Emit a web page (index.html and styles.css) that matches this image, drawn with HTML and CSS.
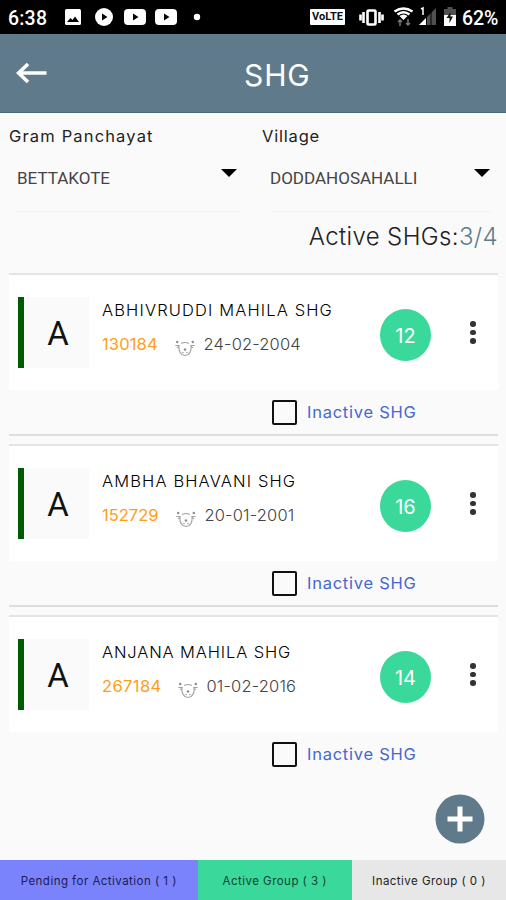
FILE: index.html
```html
<!DOCTYPE html>
<html lang="en">
<head>
<meta charset="utf-8">
<title>SHG</title>
<link rel="stylesheet" href="styles.css">
</head>
<body>
<svg class="defs" width="0" height="0" aria-hidden="true">
  <symbol id="cow" viewBox="0 0 20 18">
    <g fill="none" stroke="#a2a2a2" stroke-width="1.1">
      <path d="M3.800 6C3.600 11 5 16.300 10 16.500C15 16.300 16.400 11 16.200 6"/>
      <path d="M6.200 4.500Q10 2.500 13.800 4.500M.300 6.500H4.500M15.500 6.500H19.700M2 8.800L4 7.500M18 8.800L16 7.500"/>
    </g>
    <g fill="#8c8c8c"><circle cx="2.200" cy="3" r="1.200"/><circle cx="17.800" cy="3" r="1.200"/><circle cx="10" cy="10.500" r="1.300"/><circle cx="8" cy="13.500" r=".7"/><circle cx="12" cy="13.500" r=".7"/></g>
  </symbol>
</svg>
<div class="screen">
  <div class="status">
    <span class="clock">6:38</span>
    <svg class="notifs" width="140" height="20" viewBox="0 0 140 20">
      <g fill="#fff">
        <rect x="2" y="2" width="16" height="16" rx="1.500"/>
        <circle cx="41" cy="10" r="9"/>
        <rect x="61" y="2" width="22" height="16" rx="4"/>
        <rect x="92" y="2" width="22" height="16" rx="4"/>
        <circle cx="134" cy="10" r="3.200"/>
      </g>
      <path d="M4 15L7.500 11L9.500 13L12 9.500L16 15ZM39 6.500V13.500L44.500 10ZM70 6.500V13.500L75.500 10ZM101 6.500V13.500L106.500 10Z"/>
    </svg>
    <span class="volte">VoLTE</span>
    <svg class="system" width="98" height="24" viewBox="0 0 98 24">
      <g fill="none" stroke="#fff" stroke-width="2">
        <rect x="20.500" y="5.500" width="8" height="14" rx="1" stroke-width="2.600"/>
        <path d="M16.500 7V18M32.500 7V18M13.500 9.500V15.500M35.500 9.500V15.500" stroke-width="2.600"/>
        <path d="M47.500 6.500Q56.500 .500 65.500 6.500M50.500 9.500Q56.500 5 62.500 9.500" stroke-width="2.500"/>
      </g>
      <path d="M52.500 11Q56.500 8 60.500 11L56.500 15Z" fill="#fff"/>
      <path d="M53 21V15M51 17L53 15L55 17M61 14V20M59 18L61 20L63 18" fill="none" stroke="#777" stroke-width="1.500"/>
      <path d="M72 20L89 3V20Z" fill="#505050"/>
      <path d="M72 20L79 13V20Z" fill="#fff"/>
      <path d="M79.500 4V20M84 4V20" stroke="#000"/>
      <path d="M74 4L76 3V10" fill="none" stroke="#fff" stroke-width="1.500"/>
    </svg>
    <svg class="battery" width="12" height="20" viewBox="0 0 12 20">
      <path d="M3.500 2V0H8.500V2H12V8H0V2Z" fill="#505050"/>
      <rect y="8" width="12" height="11" fill="#fff"/>
      <path d="M6.500 5L2.500 11H5.500V16L9 9.500H6.500Z" fill="#111"/>
    </svg>
    <span class="percent">62%</span>
  </div>

  <header class="bar">
    <svg class="back" width="32" height="22" viewBox="0 0 32 22"><path d="M30.500 11H3M12 2L2.500 11L12 20" fill="none" stroke="#fff" stroke-width="3.600"/></svg>
    <h1 class="title">SHG</h1>
  </header>

  <section class="filters">
    <div class="filter">
      <div class="filter-label gp">Gram Panchayat</div>
      <div class="select"><span>BETTAKOTE</span><i class="caret"></i></div>
    </div>
    <div class="filter">
      <div class="filter-label vil">Village</div>
      <div class="select"><span>DODDAHOSAHALLI</span><i class="caret"></i></div>
    </div>
  </section>

  <div class="summary"><span class="sum-label">Active SHGs:</span><span class="sum-count">3/4</span></div>

  <main class="list">
    <article class="card">
      <div class="row">
        <div class="avatar">A</div>
        <div class="info">
          <div class="name n1">ABHIVRUDDI MAHILA SHG</div>
          <div class="meta"><span class="code c1">130184</span><svg class="cow" width="20" height="18"><use href="#cow"/></svg><span class="date">24-02-2004</span></div>
        </div>
        <div class="count">12</div>
        <div class="more"><i></i><i></i><i></i></div>
      </div>
      <label class="inactive"><i class="box"></i><span>Inactive SHG</span></label>
    </article>
    <article class="card">
      <div class="row">
        <div class="avatar">A</div>
        <div class="info">
          <div class="name n2">AMBHA BHAVANI SHG</div>
          <div class="meta"><span class="code c2">152729</span><svg class="cow" width="20" height="18"><use href="#cow"/></svg><span class="date">20-01-2001</span></div>
        </div>
        <div class="count">16</div>
        <div class="more"><i></i><i></i><i></i></div>
      </div>
      <label class="inactive"><i class="box"></i><span>Inactive SHG</span></label>
    </article>
    <article class="card">
      <div class="row">
        <div class="avatar">A</div>
        <div class="info">
          <div class="name n3">ANJANA MAHILA SHG</div>
          <div class="meta"><span class="code c3">267184</span><svg class="cow" width="20" height="18"><use href="#cow"/></svg><span class="date">01-02-2016</span></div>
        </div>
        <div class="count">14</div>
        <div class="more"><i></i><i></i><i></i></div>
      </div>
      <label class="inactive"><i class="box"></i><span>Inactive SHG</span></label>
    </article>
  </main>

  <div class="actions">
    <svg width="50" height="50" viewBox="0 0 50 50"><circle cx="25" cy="25" r="24.500" fill="#5f7b8b"/><path d="M25 12.500V37.500M12.500 25H37.500" stroke="#fff" stroke-width="5"/></svg>
  </div>

  <nav class="tabs">
    <div class="tab pending">Pending for Activation ( 1 )</div>
    <div class="tab active">Active Group ( 3 )</div>
    <div class="tab idle">Inactive Group ( 0 )</div>
  </nav>
</div>
</body>
</html>
```
FILE: styles.css
```css
* { box-sizing: border-box; }
body { margin: 0; font-family: Inter, "Liberation Sans", sans-serif; background: #fafafa; color: #222; }
.defs { position: absolute; }
.screen { width: 506px; height: 900px; display: flex; flex-direction: column; overflow: hidden; white-space: nowrap; }

.status { height: 34px; flex: none; background: #000; color: #fff; display: flex; align-items: center; padding-left: 8px; font: 500 19.5px/34px Roboto, sans-serif; }
.clock { width: 40px; padding-top: 3px; letter-spacing: .2px; }
.notifs { margin-left: 15px; }
.volte { margin-left: 107px; width: 35px; height: 16px; background: #fff; color: #111; border-radius: 1px; font: 700 11px/16px Roboto, sans-serif; text-align: center; }
.system { margin-left: 2px; }
.battery { margin-left: -1px; }
.percent { margin-left: 6px; padding-top: 3px; letter-spacing: -0.1px; }

.bar { height: 79px; flex: none; background: #5f7b8b; border-bottom: 1px solid #47697a; display: grid; grid-template-columns: 48px 1fr; align-items: center; }
.back { margin-left: 16px; }
.title { margin: 4px 0 0; font-size: 30px; line-height: 36px; font-weight: 400; color: #fff; padding-left: 196px; letter-spacing: .9px; }

.filters { height: 99px; flex: none; display: grid; grid-template-columns: 253px 253px; }
.filter { padding: 13px 9px 0; }
.filter-label { font-size: 16.5px; line-height: 20px; letter-spacing: 1.15px; }
.vil { letter-spacing: .8px; }
.select { margin: 10px 5px 0 8px; height: 56px; border-bottom: 1px solid #f4f4f4; display: flex; justify-content: space-between; padding-top: 11px; font: 400 17px/22px Roboto, sans-serif; color: #444; }
.caret { width: 0; height: 0; margin: 2px 2px 0 0; border: 8px solid transparent; border-top: 8px solid #000; border-bottom: 0; }

.summary { height: 61px; flex: none; display: flex; justify-content: flex-end; padding: 10px 8px 0 0; font-size: 24px; line-height: 30px; font-weight: 300; letter-spacing: .37px; }
.sum-count { color: #607d8b; }

.list { height: 503px; flex: none; margin: 0 8px 0 9px; overflow: hidden; }
.card { height: 163px; margin-bottom: 8px; border-top: 2px solid #e4e4e4; border-bottom: 2px solid #dedede; }
.card:last-child { border-bottom: 0; }
.row { height: 115px; background: #fff; display: flex; padding: 22px 0 0 9px; }
.avatar { width: 71px; height: 71px; border-left: 6px solid #005c00; background: #fafafa; color: #111; font: 400 33px/74px Roboto, sans-serif; text-align: center; padding-left: 3px; }
.info { width: 278px; padding: 2px 0 0 13px; }
.name { font-size: 16.5px; line-height: 22px; font-weight: 300; color: #000; letter-spacing: 1.13px; }
.n3 { letter-spacing: .86px; }
.meta { display: flex; margin-top: 12px; line-height: 22px; font-size: 16.5px; font-weight: 300; }
.code { color: #ff9d16; font-weight: 400; }
.c1 { width: 56px; letter-spacing: .15px; }
.c2 { width: 57px; }
.c3 { width: 59px; letter-spacing: .4px; }
.cow { margin: 6px 9px 0 16.5px; }
.date { color: #444; letter-spacing: .15px; }
.count { width: 51px; height: 52px; margin: 12px 0 0 13px; border-radius: 50%; background: #3bd89b; color: #fff; font-size: 20px; line-height: 54px; text-align: center; font-weight: 400; }
.more { display: flex; flex-direction: column; gap: 3px; margin: 24px 0 0 39px; }
.more i { width: 5.5px; height: 5.5px; border-radius: 50%; background: #333; }
.inactive { display: flex; align-items: center; gap: 10px; height: 46px; padding: 0 0 2px 263px; font-size: 16.5px; letter-spacing: .75px; color: #4668cf; }
.box { width: 25px; height: 25px; border: 2.5px solid #111; border-radius: 2px; }

.actions { flex: 1; display: flex; justify-content: flex-end; padding: 18px 21px 0 0; }
.tabs { height: 40px; flex: none; display: grid; grid-template-columns: 197.5px 154.5px 1fr; font-size: 11.5px; line-height: 42px; letter-spacing: .47px; text-align: center; }
.pending { background: #7b83fc; color: #181c55; }
.active { background: #3bd89b; color: #0c4430; }
.idle { background: #e7e7e7; color: #222; }
```
